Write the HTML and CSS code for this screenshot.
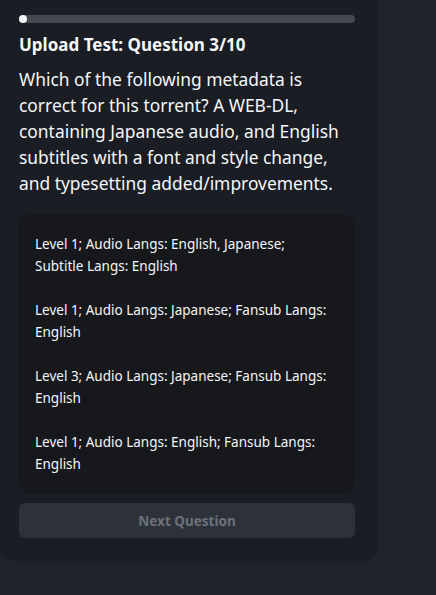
FILE: index.html
```html
<!DOCTYPE html>
<html>
	<head>
		<title>Upload Test</title>
		<link rel="stylesheet" href="styles.css">
	</head>
	<body>
		<div class="card">
			<div class="progress"><div class="progress-dot"></div></div>
			<h1>Upload Test: Question 3/10</h1>
			<p class="question">Which of the following metadata is correct for this torrent? A WEB-DL, containing Japanese audio, and English subtitles with a font and style change, and typesetting added/improvements.</p>
			<div class="options">
				<div class="option">Level 1; Audio Langs: English, Japanese; Subtitle Langs: English</div>
				<div class="option">Level 1; Audio Langs: Japanese; Fansub Langs: English</div>
				<div class="option">Level 3; Audio Langs: Japanese; Fansub Langs: English</div>
				<div class="option">Level 1; Audio Langs: English; Fansub Langs: English</div>
			</div>
			<button disabled>Next Question</button>
		</div>
	</body>
</html>
```

FILE: styles.css
```css
* {
	margin: 0; padding: 0;
	box-sizing: border-box;
}

body {
	background: #1f232a;
	font-family: "Noto Sans", sans-serif;
	color: #f4f6f8;
}

.card {
	width: 378px;
	background: #1a1d24;
	padding: 15px 23px 23px 19px;
	border-radius: 0 0 14px 14px;
}

.progress {
	height: 8px;
	background: #454950;
	border-radius: 4px;
	margin-bottom: 11px;
}

.progress-dot {
	width: 8px;
	height: 8px;
	border-radius: 50%;
	background: #f4f6f8;
}

h1 {
	font-size: 17px;
	font-weight: 700;
	line-height: 22px;
	margin-bottom: 10px;
}

.question {
	font-size: 17.4px;
	line-height: 26px;
	margin-bottom: 18px;
}

.options {
	background: #16181c;
	border-radius: 12px;
	padding: 8px 20px 8px 16px;
	margin-bottom: 9px;
}

.option {
	font-size: 13.5px;
	line-height: 22px;
	padding: 11px 0;
}

button {
	display: block;
	width: 100%;
	height: 35px;
	border: none;
	border-radius: 6px;
	background: #2d323a;
	color: #6b717a;
	font-family: "Noto Sans", sans-serif;
	font-size: 13.5px;
	font-weight: 700;
}
```
